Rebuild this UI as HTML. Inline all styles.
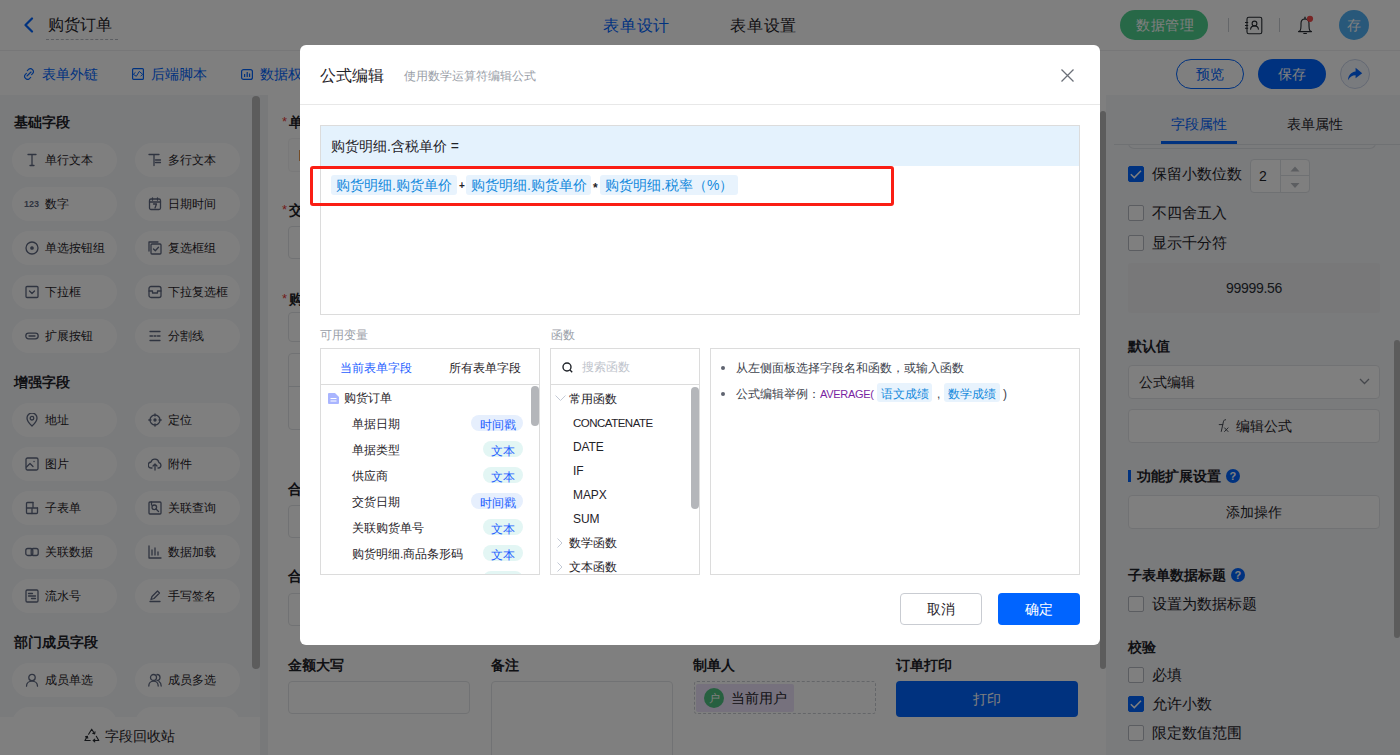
<!DOCTYPE html>
<html><head><meta charset="utf-8">
<style>
*{box-sizing:border-box;margin:0;padding:0}
html,body{width:1400px;height:755px;overflow:hidden}
body{position:relative;font-family:"Liberation Sans",sans-serif;color:#1f2329;background:#fff}
.a{position:absolute}
.t{position:absolute;white-space:nowrap;line-height:1}
/* header */
#hdr{left:0;top:0;width:1400px;height:51px;background:#fff;border-bottom:1px solid #eeeff1}
#tb{left:0;top:51px;width:1400px;height:44px;background:#fff}
#lp{left:0;top:95px;width:260px;height:660px;background:#f4f6f9}
#gap{left:260px;top:95px;width:8px;height:660px;background:#f0f2f5}
#cv{left:268px;top:95px;width:838px;height:660px;background:#fff}
#rp{left:1106px;top:95px;width:294px;height:660px;background:#f4f6f9}
.chip{position:absolute;width:105px;height:34px;border-radius:17px;background:#fff}
.chip span{position:absolute;left:33px;top:10px;font-size:12px;line-height:14px;white-space:nowrap;color:#1f2329}

.sec{position:absolute;left:14px;font-size:14px;font-weight:bold;line-height:14px;color:#1f2329}
.lbl{position:absolute;font-size:14px;font-weight:bold;line-height:14px;color:#1f2329;white-space:nowrap}
.inp{position:absolute;border:1px solid #e3e5e8;border-radius:4px;background:#fff}
.cb{position:absolute;left:1128px;width:16px;height:16px;border:1px solid #b6bac2;border-radius:2px;background:#fff}
.cb.on{background:#0064ff;border-color:#0064ff}
.rt{position:absolute;left:1152px;font-size:14.6px;line-height:14px;color:#1f2329;white-space:nowrap}
#mask{left:0;top:0;width:1400px;height:755px;background:rgba(0,0,0,.5)}
</style></head><body>
<div id="hdr" class="a"></div>
<div id="tb" class="a"></div>
<div id="lp" class="a"></div>
<div id="gap" class="a"></div>
<div id="cv" class="a"></div>
<div id="rp" class="a"></div>
<!-- header content -->
<svg class="a" style="left:22px;top:17px" width="14" height="16" viewBox="0 0 14 16"><path d="M10 1.5 L3.5 8 L10 14.5" fill="none" stroke="#0064ff" stroke-width="2.2" stroke-linecap="round" stroke-linejoin="round"/></svg>
<div class="t" style="left:48px;top:16px;font-size:16px;line-height:18px;color:#1f2329">购货订单</div>
<div class="a" style="left:46px;top:39px;width:72px;height:0;border-top:1px dashed #b8bcc4"></div>
<div class="t" style="left:603px;top:17px;font-size:16px;line-height:18px;letter-spacing:0.8px;color:#0064ff">表单设计</div>
<div class="t" style="left:730px;top:17px;font-size:16px;line-height:18px;letter-spacing:0.8px;color:#1f2329">表单设置</div>
<div class="a" style="left:1120px;top:10px;width:88px;height:30px;border-radius:15px;background:#4fd08f"></div>
<div class="t" style="left:1136px;top:17px;font-size:14px;line-height:16px;letter-spacing:0.5px;color:#fff">数据管理</div>
<div class="a" style="left:1228px;top:18px;width:1px;height:14px;background:#c9ccd2"></div>
<svg class="a" style="left:1240px;top:14px" width="26" height="24" viewBox="0 0 26 24"><rect x="7" y="3.2" width="14.8" height="16.5" rx="1.8" fill="none" stroke="#262a30" stroke-width="1.1"/><circle cx="14.5" cy="9.5" r="2.4" fill="none" stroke="#262a30" stroke-width="1.1"/><path d="M10.5 15.6 C10.8 12.8 12.5 11.9 14.5 11.9 C16.5 11.9 18.2 12.8 18.5 15.6" fill="none" stroke="#262a30" stroke-width="1.1"/><path d="M5 8.5h3.2M5 11.5h3.2M5 14.3h3.2" stroke="#262a30" stroke-width="1.1"/></svg>
<div class="a" style="left:1279px;top:18px;width:1px;height:14px;background:#c9ccd2"></div>
<svg class="a" style="left:1294px;top:14px" width="22" height="22" viewBox="0 0 22 22"><path d="M6 16.8 C6.8 15.8 7 14.5 7 12 V9.5 C7 6.8 8.8 5 11 5 C13.2 5 15 6.8 15 9.5 V12 C15 14.5 15.2 15.8 16 16.8 C17 17.5 17.5 17.6 17.5 17.6 H4.5 C4.5 17.6 5 17.5 6 16.8 Z" fill="none" stroke="#262a30" stroke-width="1.1" stroke-linejoin="round"/><path d="M9.8 19.5h2.6" stroke="#262a30" stroke-width="1.2" stroke-linecap="round"/><path d="M11 3.2v1.6" stroke="#262a30" stroke-width="1.2" stroke-linecap="round"/><circle cx="16" cy="4.8" r="3.1" fill="#f04a4a"/></svg>
<div class="a" style="left:1339px;top:10px;width:30px;height:30px;border-radius:50%;background:#50b0f4"></div>
<div class="t" style="left:1347px;top:18px;font-size:14px;line-height:14px;color:#fff">存</div>
<!-- toolbar -->
<svg class="a" style="left:22px;top:67px" width="14" height="14" viewBox="0 0 14 14"><path d="M5 9 L9 5" stroke="#0064ff" stroke-width="1.1" stroke-linecap="round"/><path d="M5.3 3.6 L6.6 2.3 a3 3 0 0 1 4.2 4.2 L9.6 7.7" fill="none" stroke="#0064ff" stroke-width="1.1" stroke-linecap="round"/><path d="M4.4 6.3 L3.2 7.5 a3 3 0 0 0 4.2 4.2 L8.7 10.4" fill="none" stroke="#0064ff" stroke-width="1.1" stroke-linecap="round"/></svg>
<div class="t" style="left:42px;top:67px;font-size:14px;line-height:14px;color:#0064ff">表单外链</div>
<svg class="a" style="left:132px;top:68px" width="12" height="12" viewBox="0 0 12 12"><rect x="0.6" y="0.6" width="10.8" height="10.8" rx="1" fill="none" stroke="#0064ff" stroke-width="1.2"/><path d="M3.5 4.3 L1.3 6.3 L4.3 8.3 L7.3 3.4 L10.6 6.3 L8.6 8.3" fill="none" stroke="#0064ff" stroke-width="1" stroke-linejoin="round"/></svg>
<div class="t" style="left:151px;top:67px;font-size:14px;line-height:14px;color:#0064ff">后端脚本</div>
<svg class="a" style="left:241px;top:69px" width="12" height="11" viewBox="0 0 12 11"><rect x="0.6" y="0.6" width="10.8" height="9.8" rx="2" fill="none" stroke="#0064ff" stroke-width="1.2"/><path d="M3.6 5v3M6.2 3v5M8.6 4.5v3.5" stroke="#0064ff" stroke-width="1.2"/></svg>
<div class="t" style="left:260px;top:67px;font-size:14px;line-height:14px;color:#0064ff">数据权限</div>
<div class="a" style="left:1176px;top:59px;width:68px;height:30px;border-radius:15px;border:1px solid #0064ff;background:#fff"></div>
<div class="t" style="left:1196px;top:67px;font-size:14px;line-height:14px;color:#0064ff">预览</div>
<div class="a" style="left:1258px;top:59px;width:68px;height:30px;border-radius:15px;background:#0064ff"></div>
<div class="t" style="left:1278px;top:67px;font-size:14px;line-height:14px;color:#fff">保存</div>
<div class="a" style="left:1340px;top:59px;width:30px;height:30px;border-radius:50%;border:1px solid #c9d3e8;background:#f3f6fc"></div>
<svg class="a" style="left:1347px;top:67px" width="16" height="14" viewBox="0 0 16 14"><path d="M1 13.2 C1.3 8.5 4 5.2 8.6 4.6 V0.8 L15.2 6.3 L8.6 11.2 V8.2 C5.2 8.2 2.8 10 1 13.2 Z" fill="#0064ff"/></svg>


<div class="sec" style="top:115px">基础字段</div>
<div class="chip" style="left:12px;top:143px"><div class="a" style="left:13px;top:10px;width:14px;height:14px"><svg width="14" height="14" viewBox="0 0 14 14" fill="none" stroke="#5f6880" stroke-width="1.3" stroke-linecap="round" stroke-linejoin="round"><path d="M3 1.5h8M7 1.5v11M5 12.5h4"/></svg></div><span>单行文本</span></div>
<div class="chip" style="left:135px;top:143px"><div class="a" style="left:13px;top:10px;width:14px;height:14px"><svg width="14" height="14" viewBox="0 0 14 14" fill="none" stroke="#5f6880" stroke-width="1.3" stroke-linecap="round" stroke-linejoin="round"><path d="M1 1.5h10M6 1.5v11M7.5 7h5M7.5 9.5h5"/></svg></div><span>多行文本</span></div>
<div class="chip" style="left:12px;top:187px"><div class="a" style="left:13px;top:10px;width:14px;height:14px"><div style="position:absolute;left:-1px;top:2px;font-size:9px;font-weight:bold;line-height:10px;color:#5f6880;letter-spacing:0px">123</div></div><span>数字</span></div>
<div class="chip" style="left:135px;top:187px"><div class="a" style="left:13px;top:10px;width:14px;height:14px"><svg width="14" height="14" viewBox="0 0 14 14" fill="none" stroke="#5f6880" stroke-width="1.3" stroke-linecap="round" stroke-linejoin="round"><rect x="1.5" y="2" width="11" height="10.5" rx="1.5"/><path d="M1.5 5h11M4.5 0.8v2.4M9.5 0.8v2.4M5.5 7h3l-1.5 4"/></svg></div><span>日期时间</span></div>
<div class="chip" style="left:12px;top:231px"><div class="a" style="left:13px;top:10px;width:14px;height:14px"><svg width="14" height="14" viewBox="0 0 14 14" fill="none" stroke="#5f6880" stroke-width="1.3" stroke-linecap="round" stroke-linejoin="round"><circle cx="7" cy="7" r="6"/><circle cx="7" cy="7" r="1.2" fill="#5f6880"/></svg></div><span>单选按钮组</span></div>
<div class="chip" style="left:135px;top:231px"><div class="a" style="left:13px;top:10px;width:14px;height:14px"><svg width="14" height="14" viewBox="0 0 14 14" fill="none" stroke="#5f6880" stroke-width="1.3" stroke-linecap="round" stroke-linejoin="round"><path d="M1 10V1h9"/><rect x="3" y="3" width="10" height="10" rx="1"/><path d="M5.5 8l1.8 1.8 3.2-3.5"/></svg></div><span>复选框组</span></div>
<div class="chip" style="left:12px;top:275px"><div class="a" style="left:13px;top:10px;width:14px;height:14px"><svg width="14" height="14" viewBox="0 0 14 14" fill="none" stroke="#5f6880" stroke-width="1.3" stroke-linecap="round" stroke-linejoin="round"><rect x="1" y="1.5" width="12" height="11" rx="1"/><path d="M4.5 6l2.5 2.5 2.5-2.5"/></svg></div><span>下拉框</span></div>
<div class="chip" style="left:135px;top:275px"><div class="a" style="left:13px;top:10px;width:14px;height:14px"><svg width="14" height="14" viewBox="0 0 14 14" fill="none" stroke="#5f6880" stroke-width="1.3" stroke-linecap="round" stroke-linejoin="round"><rect x="1" y="1.5" width="12" height="11" rx="2"/><path d="M1 6h3.5v2h5v-2h3.5"/></svg></div><span>下拉复选框</span></div>
<div class="chip" style="left:12px;top:319px"><div class="a" style="left:13px;top:10px;width:14px;height:14px"><svg width="14" height="14" viewBox="0 0 14 14" fill="none" stroke="#5f6880" stroke-width="1.3" stroke-linecap="round" stroke-linejoin="round"><rect x="0.8" y="4.2" width="12.4" height="5.6" rx="2.8"/><path d="M4 7h6"/></svg></div><span>扩展按钮</span></div>
<div class="chip" style="left:135px;top:319px"><div class="a" style="left:13px;top:10px;width:14px;height:14px"><svg width="14" height="14" viewBox="0 0 14 14" fill="none" stroke="#5f6880" stroke-width="1.3" stroke-linecap="round" stroke-linejoin="round"><path d="M2 2.5h10M2 7h2.5M6 7h2M9.5 7h2.5M2 11.5h10"/></svg></div><span>分割线</span></div>
<div class="sec" style="top:375px">增强字段</div>
<div class="chip" style="left:12px;top:403px"><div class="a" style="left:13px;top:10px;width:14px;height:14px"><svg width="14" height="14" viewBox="0 0 14 14" fill="none" stroke="#5f6880" stroke-width="1.3" stroke-linecap="round" stroke-linejoin="round"><path d="M7 13s-5-4.5-5-8a5 5 0 0 1 10 0c0 3.5-5 8-5 8z"/><circle cx="7" cy="5.2" r="1.8"/></svg></div><span>地址</span></div>
<div class="chip" style="left:135px;top:403px"><div class="a" style="left:13px;top:10px;width:14px;height:14px"><svg width="14" height="14" viewBox="0 0 14 14" fill="none" stroke="#5f6880" stroke-width="1.3" stroke-linecap="round" stroke-linejoin="round"><circle cx="7" cy="7" r="5"/><circle cx="7" cy="7" r="1" fill="#5f6880"/><path d="M7 0.8v2.2M7 11v2.2M0.8 7h2.2M11 7h2.2"/></svg></div><span>定位</span></div>
<div class="chip" style="left:12px;top:447px"><div class="a" style="left:13px;top:10px;width:14px;height:14px"><svg width="14" height="14" viewBox="0 0 14 14" fill="none" stroke="#5f6880" stroke-width="1.3" stroke-linecap="round" stroke-linejoin="round"><rect x="1" y="1" width="12" height="12" rx="1.5"/><path d="M1.5 10l3.5-3.5 3 3M9 4.5h0.1"/></svg></div><span>图片</span></div>
<div class="chip" style="left:135px;top:447px"><div class="a" style="left:13px;top:10px;width:14px;height:14px"><svg width="14" height="14" viewBox="0 0 14 14" fill="none" stroke="#5f6880" stroke-width="1.3" stroke-linecap="round" stroke-linejoin="round"><path d="M4 11H3.5a3 3 0 0 1-.5-6 4 4 0 0 1 7.8 0.5A2.8 2.8 0 0 1 10.5 11H10"/><path d="M7 7v6M5 9l2-2 2 2"/></svg></div><span>附件</span></div>
<div class="chip" style="left:12px;top:491px"><div class="a" style="left:13px;top:10px;width:14px;height:14px"><svg width="14" height="14" viewBox="0 0 14 14" fill="none" stroke="#5f6880" stroke-width="1.3" stroke-linecap="round" stroke-linejoin="round"><path d="M8 1.5H2.5a1 1 0 0 0-1 1v9a1 1 0 0 0 1 1h9a1 1 0 0 0 1-1V7"/><path d="M1.5 7h11M7 7v5.5M8 1.5v5.5"/></svg></div><span>子表单</span></div>
<div class="chip" style="left:135px;top:491px"><div class="a" style="left:13px;top:10px;width:14px;height:14px"><svg width="14" height="14" viewBox="0 0 14 14" fill="none" stroke="#5f6880" stroke-width="1.3" stroke-linecap="round" stroke-linejoin="round"><rect x="1" y="1" width="12" height="12" rx="1"/><circle cx="6.3" cy="6.3" r="2.3"/><path d="M8 8l2.5 2.5M3.5 1v3"/></svg></div><span>关联查询</span></div>
<div class="chip" style="left:12px;top:535px"><div class="a" style="left:13px;top:10px;width:14px;height:14px"><svg width="14" height="14" viewBox="0 0 14 14" fill="none" stroke="#5f6880" stroke-width="1.3" stroke-linecap="round" stroke-linejoin="round"><rect x="0.8" y="3.5" width="7" height="7" rx="2"/><rect x="6.2" y="3.5" width="7" height="7" rx="2"/></svg></div><span>关联数据</span></div>
<div class="chip" style="left:135px;top:535px"><div class="a" style="left:13px;top:10px;width:14px;height:14px"><svg width="14" height="14" viewBox="0 0 14 14" fill="none" stroke="#5f6880" stroke-width="1.3" stroke-linecap="round" stroke-linejoin="round"><path d="M1 1v12h12M4 10V5M7 10V3M10 10V7"/></svg></div><span>数据加载</span></div>
<div class="chip" style="left:12px;top:579px"><div class="a" style="left:13px;top:10px;width:14px;height:14px"><svg width="14" height="14" viewBox="0 0 14 14" fill="none" stroke="#5f6880" stroke-width="1.3" stroke-linecap="round" stroke-linejoin="round"><rect x="1" y="1" width="12" height="12" rx="1.2"/><path d="M3.5 4.5h4M3.5 7h7M6.5 9.5h4"/></svg></div><span>流水号</span></div>
<div class="chip" style="left:135px;top:579px"><div class="a" style="left:13px;top:10px;width:14px;height:14px"><svg width="14" height="14" viewBox="0 0 14 14" fill="none" stroke="#5f6880" stroke-width="1.3" stroke-linecap="round" stroke-linejoin="round"><path d="M2 12.5h10M3 10.5l1-3 5.5-5.5 2 2-5.5 5.5z"/></svg></div><span>手写签名</span></div>
<div class="sec" style="top:635px">部门成员字段</div>
<div class="chip" style="left:12px;top:663px"><div class="a" style="left:13px;top:10px;width:14px;height:14px"><svg width="14" height="14" viewBox="0 0 14 14" fill="none" stroke="#5f6880" stroke-width="1.3" stroke-linecap="round" stroke-linejoin="round"><circle cx="7" cy="4.5" r="3.2"/><path d="M1.5 13.2c0-3 2.5-5 5.5-5s5.5 2 5.5 5"/></svg></div><span>成员单选</span></div>
<div class="chip" style="left:135px;top:663px"><div class="a" style="left:13px;top:10px;width:14px;height:14px"><svg width="14" height="14" viewBox="0 0 14 14" fill="none" stroke="#5f6880" stroke-width="1.3" stroke-linecap="round" stroke-linejoin="round"><circle cx="5.5" cy="4.5" r="3"/><path d="M0.8 13c0-2.8 2-4.8 4.7-4.8s4.7 2 4.7 4.8M9 1.5a3 3 0 0 1 0 6M11 8.5c1.3 0.8 2.2 2.5 2.2 4.5"/></svg></div><span>成员多选</span></div>
<div class="chip" style="left:12px;top:707px"><div class="a" style="left:13px;top:10px;width:14px;height:14px"></div><span></span></div>
<div class="chip" style="left:135px;top:707px"><div class="a" style="left:13px;top:10px;width:14px;height:14px"></div><span></span></div>
<div class="a" style="left:252px;top:96px;width:8px;height:573px;border-radius:4px;background:#b8b8b8"></div>
<div class="a" style="left:0;top:717px;width:260px;height:38px;background:#fff"></div>
<svg class="a" style="left:84px;top:728px" width="16" height="15" viewBox="0 0 16 15" fill="none" stroke="#262a30" stroke-width="1.1" stroke-linejoin="round" stroke-linecap="round"><path d="M4.6 6.2 L7.7 1.2 L10.6 5.8"/><path d="M10.6 5.8 L11 3.9 M10.6 5.8 L8.8 5.4"/><path d="M12.3 8.3 L14.8 12.5 H9.3"/><path d="M9.3 12.5 L10.8 11.2 M9.3 12.5 L10.8 13.8"/><path d="M6.2 12.5 H0.9 L3.3 8.4"/><path d="M3.3 8.4 L1.5 8.9 M3.3 8.4 L3.8 10.2"/></svg>
<div class="t" style="left:105px;top:729px;font-size:14px;line-height:14px;color:#1f2329">字段回收站</div>
<div class="t" style="left:282px;top:115px;font-size:13px;line-height:13px;color:#e53935">*</div><div class="lbl" style="left:289px;top:115px">单据日期</div>
<div class="inp" style="left:288px;top:138px;width:182px;height:34px;background:#fdfdfd;border-color:#f3f3f4"></div>
<div class="a" style="left:299px;top:150px;width:1px;height:11px;background:#e89a50"></div>
<div class="t" style="left:282px;top:203px;font-size:13px;line-height:13px;color:#e53935">*</div><div class="lbl" style="left:289px;top:203px">交货日期</div>
<div class="inp" style="left:288px;top:226px;width:182px;height:33px"></div>
<div class="t" style="left:282px;top:292px;font-size:13px;line-height:13px;color:#e53935">*</div><div class="lbl" style="left:289px;top:292px">购货明细</div>
<div class="inp" style="left:288px;top:312px;width:182px;height:30px"></div>
<div class="inp" style="left:288px;top:353px;width:790px;height:77px"></div>
<div class="a" style="left:288px;top:386px;width:790px;height:1px;background:#dfe2e6"></div>
<div class="lbl" style="left:288px;top:482px">合计</div>
<div class="inp" style="left:288px;top:505px;width:182px;height:33px"></div>
<div class="lbl" style="left:288px;top:569px">合计金额</div>
<div class="inp" style="left:288px;top:593px;width:182px;height:33px"></div>
<div class="lbl" style="left:288px;top:658px">金额大写</div>
<div class="inp" style="left:288px;top:681px;width:182px;height:33px"></div>
<div class="lbl" style="left:491px;top:658px">备注</div>
<div class="inp" style="left:491px;top:681px;width:182px;height:90px"></div>
<div class="lbl" style="left:693px;top:658px">制单人</div>
<div class="a" style="left:694px;top:681px;width:182px;height:33px;border:1px dashed #c9ccd2;border-radius:3px"></div>
<div class="a" style="left:696px;top:684px;width:98px;height:28px;background:#ece3fb;border-radius:2px"></div>
<div class="a" style="left:704px;top:688px;width:20px;height:20px;border-radius:50%;background:#4fc080"></div>
<div class="t" style="left:709px;top:692px;font-size:11px;line-height:12px;color:#fff">户</div>
<div class="t" style="left:731px;top:691px;font-size:14px;line-height:14px;color:#1f2329">当前用户</div>
<div class="lbl" style="left:896px;top:658px">订单打印</div>
<div class="a" style="left:896px;top:681px;width:182px;height:36px;background:#0064ff;border-radius:4px"></div>
<div class="t" style="left:973px;top:692px;font-size:14px;line-height:14px;color:#fff">打印</div>
<div class="a" style="left:1100px;top:111px;width:6px;height:558px;border-radius:3px;background:#b8b8b8"></div>
<div class="t" style="left:1171px;top:117px;font-size:14px;line-height:14px;color:#0064ff">字段属性</div>
<div class="t" style="left:1287px;top:117px;font-size:14px;line-height:14px;color:#1f2329">表单属性</div>
<div class="a" style="left:1128px;top:145px;width:248px;height:4px;overflow:hidden"><div class="a" style="left:0;top:-10px;width:248px;height:14px;border:1px solid #dfe2e6;border-top:none;border-radius:0 0 6px 6px"></div></div>
<div class="a" style="left:1114px;top:144px;width:286px;height:1px;background:#dfe2e6"></div>
<div class="a" style="left:1161px;top:141px;width:76px;height:3px;background:#0064ff"></div>
<div class="cb on" style="top:166px;left:1128px"><svg class="a" style="left:-1px;top:-1px" width="16" height="16" viewBox="0 0 16 16"><path d="M2.8 8.3 L6.3 11.6 L13 4.8" fill="none" stroke="#fff" stroke-width="1.5"/></svg></div><div class="rt" style="top:167px;left:1152px">保留小数位数</div>
<div class="inp" style="left:1250px;top:159px;width:60px;height:34px;border-color:#dfe2e6"></div>
<div class="a" style="left:1280px;top:160px;width:1px;height:32px;background:#dfe2e6"></div>
<div class="a" style="left:1281px;top:175px;width:28px;height:1px;background:#dfe2e6"></div>
<div class="t" style="left:1259px;top:169px;font-size:14px;line-height:14px;color:#1f2329">2</div>
<svg class="a" style="left:1289px;top:165px" width="12" height="24" viewBox="0 0 12 24"><path d="M1.5 6.5L6 1.5l4.5 5z" fill="#b9bcc2"/><path d="M1.5 18L6 23l4.5-5z" fill="#b9bcc2"/></svg>
<div class="cb" style="top:205px;left:1128px"></div><div class="rt" style="top:206px;left:1152px">不四舍五入</div>
<div class="cb" style="top:235px;left:1128px"></div><div class="rt" style="top:236px;left:1152px">显示千分符</div>
<div class="a" style="left:1128px;top:263px;width:252px;height:50px;background:#f0f1f3;border-radius:3px"></div>
<div class="t" style="left:1226px;top:281px;font-size:14px;line-height:14px;letter-spacing:-0.3px;color:#2a2e35">99999.56</div>
<div class="lbl" style="left:1128px;top:339px">默认值</div>
<div class="inp" style="left:1128px;top:365px;width:252px;height:34px"></div>
<div class="t" style="left:1139px;top:375px;font-size:14px;line-height:14px;color:#1f2329">公式编辑</div>
<svg class="a" style="left:1359px;top:378px" width="11" height="7" viewBox="0 0 11 7"><path d="M1 1l4.5 4.5L10 1" fill="none" stroke="#8a8f99" stroke-width="1.3"/></svg>
<div class="inp" style="left:1128px;top:409px;width:252px;height:34px"></div>
<svg class="a" style="left:1216px;top:419px" width="16" height="16" viewBox="0 0 16 16"><path d="M10 0.8 C8.6 0.5 7.8 1.2 7.4 2.8 L5.2 12.8" fill="none" stroke="#4a4f58" stroke-width="1"/><path d="M2.8 5.6h4.4" stroke="#4a4f58" stroke-width="1"/><path d="M8.3 8.6l4 4.2M12.3 8.6l-4 4.2" stroke="#4a4f58" stroke-width="1"/></svg>
<div class="t" style="left:1236px;top:419px;font-size:14px;line-height:14px;color:#1f2329">编辑公式</div>
<div class="a" style="left:1128px;top:470px;width:3px;height:12px;background:#0064ff"></div>
<div class="lbl" style="left:1137px;top:469px">功能扩展设置</div>
<div class="a" style="left:1226px;top:469px;width:14px;height:14px;border-radius:50%;background:#0064ff"></div><div class="t" style="left:1229.5px;top:470.5px;font-size:11px;font-weight:bold;line-height:11px;color:#fff">?</div>
<div class="inp" style="left:1128px;top:495px;width:252px;height:34px"></div>
<div class="t" style="left:1226px;top:505px;font-size:14px;line-height:14px;color:#1f2329">添加操作</div>
<div class="lbl" style="left:1128px;top:568px">子表单数据标题</div>
<div class="a" style="left:1231px;top:568px;width:14px;height:14px;border-radius:50%;background:#0064ff"></div><div class="t" style="left:1234.5px;top:569.5px;font-size:11px;font-weight:bold;line-height:11px;color:#fff">?</div>
<div class="cb" style="top:596px;left:1128px"></div><div class="rt" style="top:597px;left:1152px">设置为数据标题</div>
<div class="lbl" style="left:1128px;top:640px">校验</div>
<div class="cb" style="top:667px;left:1128px"></div><div class="rt" style="top:668px;left:1152px">必填</div>
<div class="cb on" style="top:696px;left:1128px"><svg class="a" style="left:-1px;top:-1px" width="16" height="16" viewBox="0 0 16 16"><path d="M2.8 8.3 L6.3 11.6 L13 4.8" fill="none" stroke="#fff" stroke-width="1.5"/></svg></div><div class="rt" style="top:697px;left:1152px">允许小数</div>
<div class="cb" style="top:725px;left:1128px"></div><div class="rt" style="top:726px;left:1152px">限定数值范围</div>
<div class="a" style="left:1394px;top:340px;width:6px;height:298px;border-radius:3px;background:#b8b8b8"></div>
<div id="mask" class="a"></div>
<div class="a" style="left:300px;top:45px;width:800px;height:600px;background:#fff;border-radius:6px"></div>
<div class="t" style="left:320px;top:67px;font-size:16px;line-height:18px;color:#1f2329">公式编辑</div>
<div class="t" style="left:404px;top:69px;font-size:12px;line-height:14px;color:#9aa0a8">使用数学运算符编辑公式</div>
<svg class="a" style="left:1060px;top:68px" width="15" height="15" viewBox="0 0 15 15"><path d="M1.5 1.5l12 12M13.5 1.5l-12 12" stroke="#6b7078" stroke-width="1.3"/></svg>
<div class="a" style="left:300px;top:104px;width:800px;height:1px;background:#e8e8e8"></div>
<div class="a" style="left:320px;top:125px;width:760px;height:190px;border:1px solid #dcdcdc;background:#fff"></div>
<div class="a" style="left:321px;top:126px;width:758px;height:40px;background:#e4f2fd"></div>
<div class="t" style="left:331px;top:139px;font-size:14px;line-height:14px;color:#1f2329">购货明细.含税单价 =</div>
<div class="a" style="left:331px;top:175px;width:126px;height:20px;background:#e8f3fd;border-radius:3px"></div><div class="t" style="left:336px;top:178px;font-size:14px;line-height:14px;color:#1389dc">购货明细.购货单价</div>
<div class="t" style="left:459px;top:181px;font-size:10px;font-weight:bold;line-height:10px;color:#1f2329">+</div>
<div class="a" style="left:466px;top:175px;width:125px;height:20px;background:#e8f3fd;border-radius:3px"></div><div class="t" style="left:471px;top:178px;font-size:14px;line-height:14px;color:#1389dc">购货明细.购货单价</div>
<div class="t" style="left:593px;top:182px;font-size:12px;font-weight:bold;line-height:12px;color:#1f2329">*</div>
<div class="a" style="left:600px;top:175px;width:138px;height:20px;background:#e8f3fd;border-radius:3px"></div><div class="t" style="left:605px;top:178px;font-size:14px;line-height:14px;color:#1389dc">购货明细.税率（%）</div>
<div class="a" style="left:310px;top:166px;width:584px;height:40px;border:3px solid #fa1e14;border-radius:3px"></div>
<div class="t" style="left:320px;top:329px;font-size:12px;line-height:12px;color:#9aa0a8">可用变量</div>
<div class="t" style="left:551px;top:329px;font-size:12px;line-height:12px;color:#9aa0a8">函数</div>
<div class="a" style="left:320px;top:348px;width:220px;height:227px;border:1px solid #dcdcdc;overflow:hidden"><div class="a" style="left:0;top:35px;width:218px;height:1px;background:#dcdcdc"></div><div class="t" style="left:19px;top:13px;font-size:12px;line-height:12px;color:#1f5fff">当前表单字段</div><div class="t" style="left:128px;top:13px;font-size:12px;line-height:12px;color:#1f2329">所有表单字段</div><svg class="a" style="left:7px;top:44px" width="11" height="11" viewBox="0 0 11 11"><path d="M0 1a1 1 0 0 1 1-1h6l4 4v6a1 1 0 0 1-1 1H1a1 1 0 0 1-1-1z" fill="#a9b5ff"/><path d="M2.5 5.5h6M2.5 8h6" stroke="#fff" stroke-width="1"/></svg><div class="t" style="left:23px;top:43px;font-size:12px;line-height:12px;color:#1f2329">购货订单</div>
<div class="t" style="left:31px;top:69px;font-size:12px;line-height:12px;color:#1f2329">单据日期</div>
<div class="a" style="left:150px;top:66px;width:52px;height:16px;border-radius:8px;background:#e6effd"></div><div class="t" style="left:159px;top:70px;font-size:12px;line-height:12px;color:#1f5fff">时间戳</div>
<div class="t" style="left:31px;top:95px;font-size:12px;line-height:12px;color:#1f2329">单据类型</div>
<div class="a" style="left:162px;top:92px;width:40px;height:16px;border-radius:8px;background:#e3f6f4"></div><div class="t" style="left:170px;top:96px;font-size:12px;line-height:12px;color:#1f5fff">文本</div>
<div class="t" style="left:31px;top:121px;font-size:12px;line-height:12px;color:#1f2329">供应商</div>
<div class="a" style="left:162px;top:118px;width:40px;height:16px;border-radius:8px;background:#e3f6f4"></div><div class="t" style="left:170px;top:122px;font-size:12px;line-height:12px;color:#1f5fff">文本</div>
<div class="t" style="left:31px;top:147px;font-size:12px;line-height:12px;color:#1f2329">交货日期</div>
<div class="a" style="left:150px;top:144px;width:52px;height:16px;border-radius:8px;background:#e6effd"></div><div class="t" style="left:159px;top:148px;font-size:12px;line-height:12px;color:#1f5fff">时间戳</div>
<div class="t" style="left:31px;top:173px;font-size:12px;line-height:12px;color:#1f2329">关联购货单号</div>
<div class="a" style="left:162px;top:170px;width:40px;height:16px;border-radius:8px;background:#e3f6f4"></div><div class="t" style="left:170px;top:174px;font-size:12px;line-height:12px;color:#1f5fff">文本</div>
<div class="t" style="left:31px;top:199px;font-size:12px;line-height:12px;color:#1f2329">购货明细.商品条形码</div>
<div class="a" style="left:162px;top:196px;width:40px;height:16px;border-radius:8px;background:#e3f6f4"></div><div class="t" style="left:170px;top:200px;font-size:12px;line-height:12px;color:#1f5fff">文本</div>
<div class="t" style="left:31px;top:225px;font-size:12px;line-height:12px;color:#1f2329"></div>
<div class="a" style="left:162px;top:222px;width:40px;height:16px;border-radius:8px;background:#e3f6f4"></div><div class="t" style="left:170px;top:226px;font-size:12px;line-height:12px;color:#1f5fff">文本</div>
<div class="a" style="left:210px;top:37px;width:8px;height:40px;border-radius:4px;background:#b4b6ba"></div>
</div>
<div class="a" style="left:550px;top:348px;width:150px;height:227px;border:1px solid #dcdcdc;overflow:hidden"><div class="a" style="left:0;top:35px;width:148px;height:1px;background:#dcdcdc"></div><svg class="a" style="left:11px;top:13px" width="11" height="11" viewBox="0 0 11 11"><circle cx="5" cy="5" r="4" fill="none" stroke="#1f2329" stroke-width="1.4"/><path d="M8 8l2.2 2.2" stroke="#1f2329" stroke-width="1.4"/></svg><div class="t" style="left:31px;top:12px;font-size:12px;line-height:12px;color:#c0c4cc">搜索函数</div><svg class="a" style="left:4px;top:46px" width="11" height="6" viewBox="0 0 11 6"><path d="M0.5 0.5l5 5 5-5" fill="none" stroke="#c4cad6" stroke-width="1"/></svg><div class="t" style="left:18px;top:44px;font-size:12px;line-height:12px;color:#1f2329">常用函数</div>
<div class="t" style="left:22px;top:68px;font-size:11.5px;line-height:12px;letter-spacing:-0.5px;color:#1f2329">CONCATENATE</div>
<div class="t" style="left:22px;top:92px;font-size:12px;line-height:12px;letter-spacing:-0.1px;color:#1f2329">DATE</div>
<div class="t" style="left:22px;top:116px;font-size:12px;line-height:12px;letter-spacing:-0.1px;color:#1f2329">IF</div>
<div class="t" style="left:22px;top:140px;font-size:12px;line-height:12px;letter-spacing:-0.1px;color:#1f2329">MAPX</div>
<div class="t" style="left:22px;top:164px;font-size:12px;line-height:12px;letter-spacing:-0.1px;color:#1f2329">SUM</div>
<svg class="a" style="left:6px;top:189px" width="6" height="10" viewBox="0 0 6 10"><path d="M0.5 0.5l4.5 4.5-4.5 4.5" fill="none" stroke="#c4cad6" stroke-width="1"/></svg>
<div class="t" style="left:18px;top:188px;font-size:12px;line-height:12px;color:#1f2329">数学函数</div>
<svg class="a" style="left:6px;top:213px" width="6" height="10" viewBox="0 0 6 10"><path d="M0.5 0.5l4.5 4.5-4.5 4.5" fill="none" stroke="#c4cad6" stroke-width="1"/></svg>
<div class="t" style="left:18px;top:212px;font-size:12px;line-height:12px;color:#1f2329">文本函数</div>
<div class="a" style="left:140px;top:38px;width:8px;height:122px;border-radius:4px;background:#b4b6ba"></div>
</div>
<div class="a" style="left:710px;top:348px;width:370px;height:227px;border:1px solid #dcdcdc"></div>
<div class="a" style="left:721px;top:366px;width:4px;height:4px;border-radius:50%;background:#5f6470"></div>
<div class="t" style="left:736px;top:362px;font-size:12px;line-height:12px;color:#3d434d">从左侧面板选择字段名和函数，或输入函数</div>
<div class="a" style="left:721px;top:392px;width:4px;height:4px;border-radius:50%;background:#5f6470"></div>
<div class="t" style="left:736px;top:388px;font-size:12px;line-height:12px;color:#3d434d">公式编辑举例：<span style="color:#7a1fa2;font-size:11px;letter-spacing:-0.3px">AVERAGE(</span></div>
<div class="a" style="left:877px;top:383px;width:55px;height:19px;border-radius:3px;background:#e8f3fd"></div><div class="t" style="left:881px;top:388px;font-size:12px;line-height:12px;color:#1389dc">语文成绩</div>
<div class="t" style="left:937px;top:388px;font-size:12px;line-height:12px;color:#3d434d">,</div>
<div class="a" style="left:944px;top:383px;width:56px;height:19px;border-radius:3px;background:#e8f3fd"></div><div class="t" style="left:948px;top:388px;font-size:12px;line-height:12px;color:#1389dc">数学成绩</div>
<div class="t" style="left:1003px;top:388px;font-size:12px;line-height:12px;color:#3d434d">)</div>
<div class="a" style="left:900px;top:593px;width:82px;height:32px;border:1px solid #c9ccd2;border-radius:4px;background:#fff"></div>
<div class="t" style="left:927px;top:602px;font-size:14px;line-height:14px;color:#1f2329">取消</div>
<div class="a" style="left:998px;top:593px;width:82px;height:32px;border-radius:4px;background:#0064ff"></div>
<div class="t" style="left:1025px;top:602px;font-size:14px;line-height:14px;color:#fff">确定</div>
</body></html>
